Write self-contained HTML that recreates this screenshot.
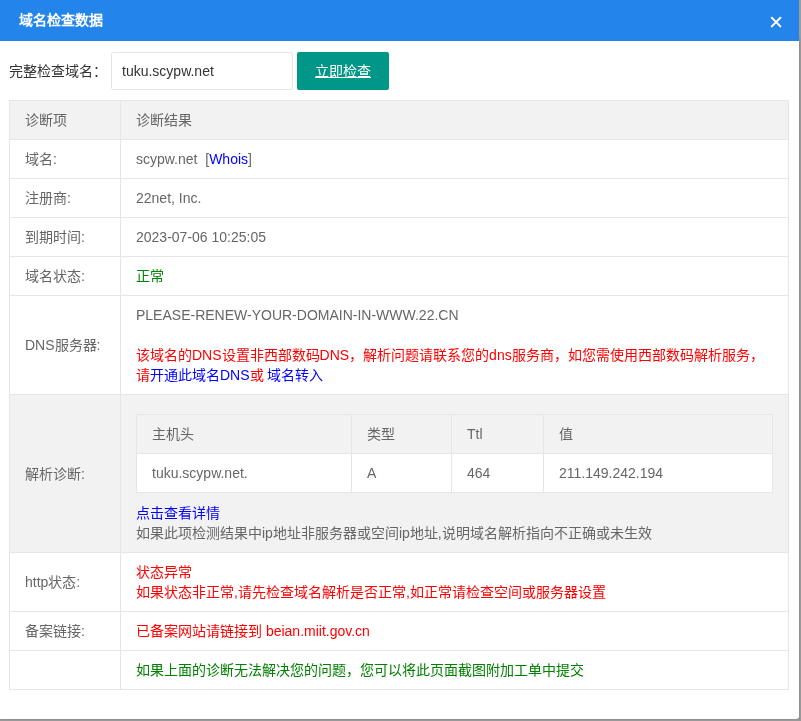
<!DOCTYPE html>
<html lang="zh-CN">
<head>
<meta charset="utf-8">
<title>域名检查数据</title>
<style>
*{box-sizing:border-box;margin:0;padding:0}
html,body{width:801px;height:721px;overflow:hidden;background:#999}
body{font-family:"Liberation Sans",sans-serif;font-size:14px;line-height:20px;color:#666;position:relative}
.edge-top{z-index:2;position:absolute;left:799px;top:0;width:2px;height:37px;background:#9c9c9c}
.dlg{position:absolute;left:0;top:0;width:799px;height:719px;background:#fff;border-bottom-right-radius:3px;overflow:hidden;will-change:transform;box-shadow:1px 1px 0 #909090}
.hd{position:absolute;left:0;top:0;width:799px;height:41px;background:#2385ea;color:#fff;font-weight:bold;font-size:14px;line-height:41px;padding-left:19px}
.close{position:absolute;left:770px;top:16px;width:12px;height:12px}
.lbl{position:absolute;left:9px;top:52px;height:38px;line-height:38px;color:#333;font-size:14px;white-space:nowrap}
.inp{position:absolute;left:111px;top:52px;width:182px;height:38px;border:1px solid #e6e6e6;border-radius:2px;line-height:36px;padding-left:10px;color:#333;font-size:14px;background:#fff}
.btn{position:absolute;left:297px;top:52px;width:92px;height:38px;background:#009688;border-radius:2px;color:#fff;text-align:center;line-height:38px;font-size:14px;text-decoration:underline}
table{border-collapse:collapse;border-spacing:0}
.main{position:absolute;left:9px;top:100px;width:780px;table-layout:fixed}
td,th{border:1px solid #e6e6e6;padding:9px 15px;font-size:14px;line-height:20px;text-align:left;font-weight:normal;vertical-align:middle;color:#666}
.main>tbody>tr>td:first-child,.main>thead>tr>th:first-child{width:111px}
thead tr,.gray{background:#f2f2f2}
.blue{color:#00f}.red{color:#f00}.green{color:#008000}
.inner{width:637px;table-layout:fixed;background:#fff;margin:10px 0}
.inner thead tr{background:#f2f2f2}
</style>
</head>
<body>
<div class="edge-top"></div>
<div class="dlg">
  <div class="hd">域名检查数据
    <svg class="close" viewBox="0 0 12 12"><path d="M1.8 1.8 L10.4 10.4 M10.4 1.8 L1.8 10.4" stroke="#fff" stroke-width="2" stroke-linecap="round" fill="none"/></svg>
  </div>
  <div class="lbl">完整检查域名：</div>
  <div class="inp">tuku.scypw.net</div>
  <div class="btn">立即检查</div>
  <table class="main">
    <colgroup><col style="width:111px"><col></colgroup>
    <thead><tr><th>诊断项</th><th>诊断结果</th></tr></thead>
    <tbody>
      <tr><td>域名:</td><td>scypw.net&nbsp; [<span class="blue">Whois</span>]</td></tr>
      <tr><td>注册商:</td><td>22net, Inc.</td></tr>
      <tr><td>到期时间:</td><td>2023-07-06 10:25:05</td></tr>
      <tr><td>域名状态:</td><td><span class="green">正常</span></td></tr>
      <tr><td>DNS服务器:</td><td>PLEASE-RENEW-YOUR-DOMAIN-IN-WWW.22.CN<br><br><span class="red">该域名的DNS设置非西部数码DNS，解析问题请联系您的dns服务商，如您需使用西部数码解析服务，<br>请<span class="blue">开通此域名DNS</span>或 <span class="blue">域名转入</span></span></td></tr>
      <tr class="gray"><td>解析诊断:</td><td>
        <table class="inner">
          <colgroup><col style="width:215px"><col style="width:100px"><col style="width:92px"><col></colgroup>
          <thead><tr><th>主机头</th><th>类型</th><th>Ttl</th><th>值</th></tr></thead>
          <tbody><tr><td>tuku.scypw.net.</td><td>A</td><td>464</td><td>211.149.242.194</td></tr></tbody>
        </table>
        <span class="blue">点击查看详情</span><br>如果此项检测结果中ip地址非服务器或空间ip地址,说明域名解析指向不正确或未生效</td></tr>
      <tr><td>http状态:</td><td><span class="red">状态异常<br>如果状态非正常,请先检查域名解析是否正常,如正常请检查空间或服务器设置</span></td></tr>
      <tr><td>备案链接:</td><td><span class="red">已备案网站请链接到 beian.miit.gov.cn</span></td></tr>
      <tr><td></td><td><span class="green">如果上面的诊断无法解决您的问题，您可以将此页面截图附加工单中提交</span></td></tr>
    </tbody>
  </table>
</div>
</body>
</html>
